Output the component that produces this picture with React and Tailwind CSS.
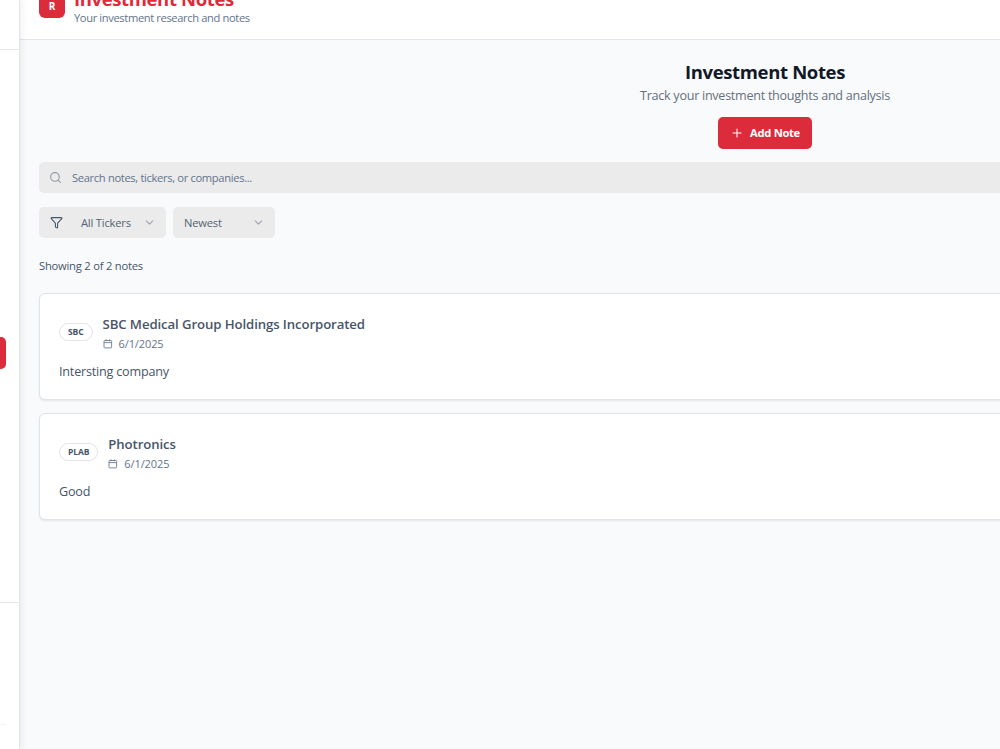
import { ChevronDown, Funnel, Plus, Search } from "lucide-react";

const notes = [
  { ticker: "SBC", company: "SBC Medical Group Holdings Incorporated", date: "6/1/2025", body: "Intersting company" },
  { ticker: "PLAB", company: "Photronics", date: "6/1/2025", body: "Good" },
];

function CalendarIcon() {
  return (
    <svg width="10" height="10" viewBox="0 0 10 10" fill="none" stroke="currentColor" strokeWidth="0.85">
      <rect x="1" y="1.5" width="7.6" height="7.4" rx="0.8" />
      <path d="M1 3.6h7.6M3 0.4v1.8M6.6 0.4v1.8" />
    </svg>
  );
}

function Sidebar() {
  return (
    <aside className="relative z-10 w-5 shrink-0 flex flex-col bg-white border-r border-[#e2e4e9] shadow-[2px_0_6px_rgba(15,23,42,0.07)]">
      <div className="h-[50px] border-b border-[#e5e7eb]" />
      <nav className="h-[553px] pt-[287px] border-b border-[#e5e7eb]">
        <div className="w-1.5 h-8 rounded-r-[5px] bg-[#dc2b3a]" />
      </nav>
      <div className="w-1.5 h-[122px] border-b border-[#f1f2f4]" />
    </aside>
  );
}

function Header() {
  return (
    <header className="h-10 shrink-0 flex items-end gap-[9px] pl-[19px] bg-white border-b border-[#e2e5ea]">
      <div className="mb-[21px] w-[26px] h-[26px] pt-[3px] rounded-[6px] bg-[#dc2b3a] flex items-center justify-center text-[10px] font-bold text-white">
        R
      </div>
      <div className="mb-[13px] whitespace-nowrap">
        <h1 className="text-[18.5px] leading-[22px] tracking-[-0.37px] font-bold text-[#dc2b3a]">Investment Notes</h1>
        <p className="text-[11.2px] leading-4 tracking-[-0.39px] text-[#64748b]">Your investment research and notes</p>
      </div>
    </header>
  );
}

function NoteCard({ note }) {
  return (
    <article className="h-[107px] px-[19px] pt-[21px] rounded-[6px] bg-white border border-[#e0e3e7] shadow-[0_1px_2px_rgba(0,0,0,0.09)]">
      <div className="flex items-start gap-2.5">
        <span className="mt-[8px] h-[18px] px-2 flex items-center rounded-full border border-[#e2e4e8] text-[8.5px] tracking-[-0.1px] font-bold text-[#475569]">
          {note.ticker}
        </span>
        <div>
          <h3 className="text-[13.2px] leading-[19px] tracking-[-0.1px] font-semibold text-[#475569]">{note.company}</h3>
          <p className="mt-px flex items-center gap-1.5 text-[11px] leading-[18px] tracking-[-0.1px] text-[#64748b]">
            <CalendarIcon />
            {note.date}
          </p>
        </div>
      </div>
      <p className="mt-[9px] text-[12.6px] leading-5 tracking-[-0.2px] text-[#475569]">{note.body}</p>
    </article>
  );
}

export default function App() {
  return (
    <div className="flex w-[1000px] h-[749px] overflow-hidden bg-[#f9fafc] font-['Open_Sans',sans-serif]">
      <Sidebar />
      <div className="flex-1 min-w-0 flex flex-col overflow-hidden">
        <Header />
        <main className="w-[1491px] pl-[19px] pr-5 pt-5">
          <div className="flex flex-col items-center">
            <h2 className="text-[18.5px] leading-6 tracking-[-0.35px] font-bold text-[#111827]">Investment Notes</h2>
            <p className="mt-px text-[12.6px] leading-[22px] tracking-[-0.28px] text-[#64707d]">Track your investment thoughts and analysis</p>
            <button
              type="button"
              className="mt-2.5 w-[94px] h-8 flex items-center justify-center gap-[6px] rounded-[5px] bg-[#dc2b3a] text-[11.2px] tracking-[-0.3px] font-bold text-white"
            >
              <Plus size={14} strokeWidth={1.75} />
              Add Note
            </button>
          </div>

          <div className="mt-[13px] h-[31px] flex items-center gap-2.5 px-2.5 rounded-[5px] bg-[#ebebeb] text-[11.2px] tracking-[-0.35px] text-[#64748b]">
            <Search size={13} className="text-[#9299a3]" />
            <span className="pt-px">Search notes, tickers, or companies...</span>
          </div>

          <div className="mt-3.5 flex gap-[7px] text-[11.2px] tracking-[-0.2px] text-[#566373]">
            <button type="button" className="w-[127px] h-[31px] flex items-center pl-[11px] pr-2.5 rounded-[5px] bg-[#ebebeb]">
              <Funnel size={13} className="text-[#475569]" />
              <span className="ml-[18px] pt-px flex-1 text-left">All Tickers</span>
              <ChevronDown size={13} className="text-[#9ca3af]" />
            </button>
            <button type="button" className="w-[102px] h-[31px] flex items-center justify-between pl-[11px] pr-2.5 rounded-[5px] bg-[#ebebeb]">
              <span className="pt-px">Newest</span>
              <ChevronDown size={13} className="text-[#9ca3af]" />
            </button>
          </div>

          <p className="mt-[19px] text-[11.2px] leading-[18px] tracking-[-0.22px] text-[#475569]">Showing 2 of 2 notes</p>

          <div className="mt-[18px] flex flex-col gap-[13px]">
            {notes.map((note) => (
              <NoteCard key={note.ticker} note={note} />
            ))}
          </div>
        </main>
      </div>
    </div>
  );
}
